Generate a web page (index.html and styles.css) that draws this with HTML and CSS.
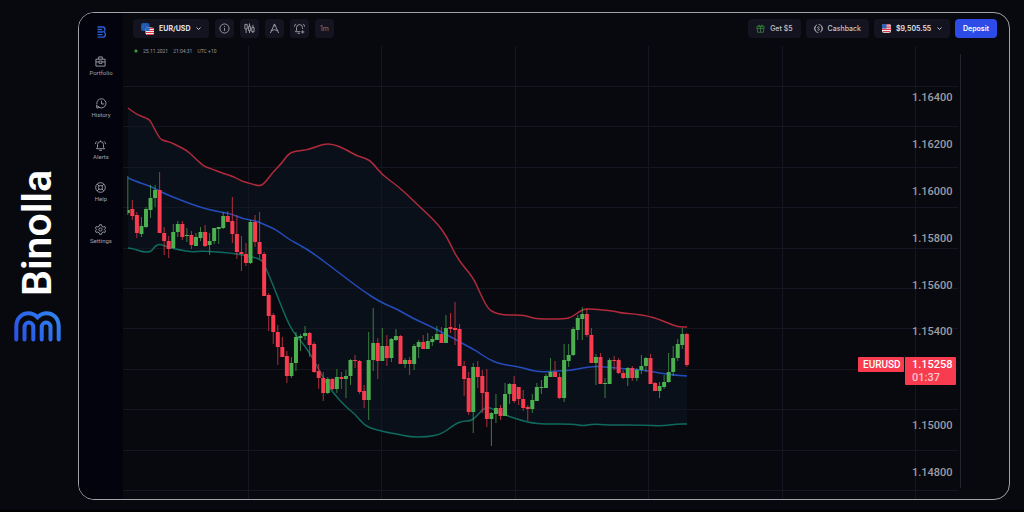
FILE: index.html
```html
<!DOCTYPE html>
<html lang="en">
<head>
  <meta charset="UTF-8" />
  <meta name="viewport" content="width=device-width, initial-scale=1" />
  <title>Binolla - EUR/USD</title>
  <link rel="stylesheet" href="styles.css">
</head>
<body>
  <div class="brand">
    <span class="brand-name">Binolla</span>
    <svg class="brand-logo" viewBox="0 0 47 31">
      <defs>
        <linearGradient id="brandFill" gradientUnits="userSpaceOnUse" x1="4" y1="31" x2="43" y2="0">
          <stop offset="0" stop-color="#2a50e8" />
          <stop offset="1" stop-color="#2f86ee" />
        </linearGradient>
      </defs>
      <g fill="none" stroke="url(#brandFill)" stroke-width="4" stroke-linecap="round">
        <path d="M2.3 28.5V15.500C2.3 7.500 7.5 2.3 14.500 2.3C18.300 2.3 21 3.800 23.500 6.300C26 3.800 28.700 2.300 32.500 2.3C39.500 2.3 44.700 7.500 44.700 15.500V28.500" />
        <path d="M10.500 28.500V16A4.400 4.400 0 0 1 19.300 16V28.500" />
        <path d="M27.700 28.500V16A4.400 4.400 0 0 1 36.500 16V28.500" />
      </g>
    </svg>
  </div>

  <div class="app">
    <nav class="sidebar">
      <a class="home" href="#" aria-label="Home">
        <svg viewBox="0 0 9 12">
          <path d="M.5 1H5.500Q8 1 8 3.400Q8 5 6.800 5.800Q8.400 6.800 8.400 8.400Q8.400 11.200 5.500 11.200H.5M.5 3.500H5M.5 6H6M.5 8.600H5.500" />
        </svg>
      </a>
      <a class="nav-item" href="#">
        <svg viewBox="0 0 24 24"><path d="M2 7H22V22H2ZM8 7V2H16V7M2 13H9M15 13H22M9 11H15V16H9Z" /></svg>
        <span>Portfolio</span>
      </a>
      <a class="nav-item" href="#">
        <svg viewBox="0 0 24 24"><path d="M2 14A10 10 0 1 1 7 20.500M12 6V13H18M1 16L2 22L8 20.500Z" /></svg>
        <span>History</span>
      </a>
      <a class="nav-item" href="#">
        <svg viewBox="0 0 24 24"><path d="M3 19H21L18.500 16V10A6.500 6.500 0 0 0 5.500 10V16ZM9 22.500H15M12 4V1M1 9Q1 5 4 3M23 9Q23 5 20 3" /></svg>
        <span>Alerts</span>
      </a>
      <a class="nav-item" href="#">
        <svg viewBox="0 0 24 24"><circle cx="12" cy="12" r="10.500" /><circle cx="12" cy="12" r="4.500" /><path d="M4.500 4.500L9 9M19.500 4.500L15 9M4.500 19.500L9 15M19.500 19.500L15 15" /></svg>
        <span>Help</span>
      </a>
      <a class="nav-item" href="#">
        <svg viewBox="0 0 24 24"><path d="M10 1.500H14L15 5L18 6.500L21.500 5.500L23 9L20.500 12L23 15L21.500 18.500L18 17.500L15 19L14 22.500H10L9 19L6 17.500L2.500 18.500L1 15L3.500 12L1 9L2.500 5.500L6 6.500L9 5Z" /><circle cx="12" cy="12" r="3.500" /></svg>
        <span>Settings</span>
      </a>
    </nav>

    <main class="main">
      <div class="topbar">
        <div class="pill pair">
          <svg class="flags" viewBox="0 0 26 24">
            <rect width="17" height="16" rx="4" fill="#1c56ae" />
            <circle cx="8" cy="8" r="4" fill="none" stroke="#5d8fce" stroke-width="1.500" stroke-dasharray="1.500 2" />
            <rect x="9" y="9" width="17" height="15" rx="4" fill="#eee" />
            <path d="M10 11H25M9 15H26M9 19H26M11 23H24" stroke="#e0354a" stroke-width="2" />
            <rect x="9" y="9" width="8" height="7" rx="2" fill="#2a64b8" />
          </svg>
          <select class="pair-select" aria-label="Asset">
            <option>EUR/USD</option>
            <option>GBP/USD</option>
          </select>
          <svg class="chevron" viewBox="0 0 10 6"><path d="M1 1L5 5L9 1" /></svg>
        </div>
        <button type="button" class="tool" aria-label="Info">
          <svg viewBox="0 0 24 24"><circle cx="12" cy="12" r="10" /><path d="M12 11V17M12 6.500V8.500" /></svg>
        </button>
        <button type="button" class="tool" aria-label="Chart type">
          <svg viewBox="0 0 24 24"><path d="M2 3H7V13H2ZM4.500 13V22M12 1V7M10 7H14V17H10ZM12 17V22M19.500 4V10M17 10H22V19H17ZM19.500 19V22" /></svg>
        </button>
        <button type="button" class="tool" aria-label="Drawing tools">
          <svg viewBox="0 0 24 24"><path d="M12 2L3 22M12 2L21 22M4 17Q12 12 20 17M10 6H14" /></svg>
        </button>
        <button type="button" class="tool" aria-label="Add alert">
          <svg viewBox="0 0 24 24"><path d="M14 19H3L5.500 16V10A6.500 6.500 0 0 1 18.500 10V13M8 22.500H13M1 8Q1 4 4 2M23 8Q23 4 20 2M19 16V23M15.500 19.500H22.500" /></svg>
        </button>
        <button type="button" class="tool timeframe">1m</button>

        <div class="account">
          <button type="button" class="pill">
            <svg class="gift" viewBox="0 0 24 24"><path d="M2 7H22V12H2ZM4 12V22H20V12M12 7V22M12 7Q5 7 6 3.500Q8 0 12 7Q16 0 18 3.500Q19 7 12 7" /></svg>
            Get $5
          </button>
          <button type="button" class="pill">
            <svg class="coin" viewBox="0 0 24 24"><path d="M8 2A11 11 0 0 0 12 23M16 22A11 11 0 0 0 12 1M15 8.500Q12 6.500 10 8.500Q9 11 12 12Q15 13 14 15.500Q12 17.500 9 15.500M4 6A10 10 0 0 0 4 18M20 6A10 10 0 0 1 20 18" /></svg>
            Cashback
          </button>
          <div class="pill">
            <svg class="us-flag" viewBox="0 0 20 20">
              <rect width="20" height="20" rx="5" fill="#eee" />
              <path d="M3 2H17M0 7H20M0 12H20M2 17H18" stroke="#e0354a" stroke-width="2.500" />
              <path d="M0 10V4Q0 0 4 0H10V10Z" fill="#2a64b8" />
            </svg>
            <select class="balance" aria-label="Account balance">
              <option>$9,505.55</option>
            </select>
            <svg class="chevron" viewBox="0 0 10 6"><path d="M1 1L5 5L9 1" /></svg>
          </div>
          <button type="button" class="pill deposit">Deposit</button>
        </div>
      </div>

      <div class="chart-area">
        <div class="clock"><i class="dot"></i><span>25.11.2021</span><span>21:04:31</span><span>UTC +10</span></div>
        <svg id="chart" class="chart" viewBox="123 40 886 459">
          <g id="grid" class="grid"></g>
          <path id="bandFill" class="band-fill" />
          <path id="bandUpper" class="line upper" />
          <path id="bandMiddle" class="line middle" />
          <path id="bandLower" class="line lower" />
          <g id="candles"></g>
          <path class="axis" d="M960.500 54V488" />
          <g id="prices" class="prices"></g>
          <g class="tag">
            <rect x="858" y="357" width="46" height="15" rx="1" />
            <rect x="905" y="357" width="51" height="28" rx="1" />
            <text class="symbol" x="863" y="368">EURUSD</text>
            <text x="912" y="368">1.15258</text>
            <text class="countdown" x="912" y="381">01:37</text>
          </g>
        </svg>
      </div>
    </main>
  </div>

  <script src="chart.js"></script>
</body>
</html>
```

FILE: styles.css
```css
* {
  box-sizing: border-box;
}

body {
  margin: 0;
  min-height: 100vh;
  display: flex;
  align-items: flex-start;
  padding: 12px 14px 10px 0;
  background-color: #08090e;
  border-bottom: 2px solid #000;
  font-family: Inter, "Liberation Sans", sans-serif;
  color: #c3c4cc;
}

/* brand strip */
.brand {
  width: 78px;
  flex: none;
  align-self: center;
  display: flex;
  flex-direction: column;
  align-items: center;
  gap: 14px;
  padding-right: 4px;
}

.brand-name {
  writing-mode: vertical-rl;
  transform: rotate(180deg);
  font-family: Roboto, sans-serif;
  font-size: 41px;
  line-height: 48px;
  font-weight: 600;
  color: #fff;
}

.brand-logo {
  width: 47px;
  height: 31px;
}

/* window */
.app {
  flex: 1;
  display: flex;
  border: 1px solid #a2a2a8;
  border-radius: 16px;
  overflow: hidden;
}

.sidebar {
  width: 44px;
  flex: none;
  display: flex;
  flex-direction: column;
  align-items: center;
  gap: 21px;
  padding-top: 13px;
  background-color: #03030d;
}

.sidebar svg,
.tool svg,
.gift,
.coin,
.chevron {
  fill: none;
  stroke: currentColor;
  stroke-width: 2;
}

.home {
  display: flex;
  height: 9px;
  color: #2a5fd8;
}

.home svg {
  width: 9px;
  height: 12px;
  stroke-width: 1.3;
}

.nav-item {
  display: flex;
  flex-direction: column;
  align-items: center;
  gap: 2px;
  color: #a0a1aa;
  font-family: Roboto, sans-serif;
  font-size: 6px;
  line-height: 8px;
  text-decoration: none;
}

.nav-item svg {
  width: 11px;
  height: 11px;
}

.main {
  flex: 1;
  min-width: 0;
}

/* top bar */
.topbar {
  display: flex;
  gap: 6px;
  padding: 6px 12px 2px 10px;
}

.account {
  display: flex;
  gap: 5px;
  margin-left: auto;
}

.pill,
.tool {
  height: 19px;
  display: flex;
  align-items: center;
  justify-content: center;
  border: none;
  border-radius: 4px;
  background-color: #141420;
  color: #c3c4cc;
  font-family: inherit;
  font-size: 7px;
  line-height: 10px;
  font-weight: 500;
}

.pill {
  gap: 5px;
  padding: 0 8px;
  white-space: nowrap;
}

.tool {
  width: 19px;
  padding: 0;
  color: #a0a1aa;
}

.tool svg {
  width: 11px;
  height: 11px;
}

.tool.timeframe {
  color: #7d7e88;
  font-weight: 400;
}

.pill select {
  appearance: none;
  border: none;
  padding: 0;
  background: none;
  color: #e2e3e8;
  font: inherit;
}

.pill .pair-select {
  font-weight: 700;
}

.pill .balance {
  font-weight: 600;
}

.flags {
  width: 13px;
  height: 12px;
}

.us-flag {
  width: 9px;
  height: 9px;
}

.chevron {
  width: 5px;
  height: 3px;
}

.gift,
.coin {
  width: 9px;
  height: 9px;
}

.gift {
  color: #37873f;
}

.pill.deposit {
  background-color: #2d4be6;
  color: #fff;
  font-weight: 600;
}

/* chart */
.chart-area {
  position: relative;
}

.clock {
  position: absolute;
  left: 11px;
  top: 7px;
  display: flex;
  align-items: center;
  gap: 5px;
  color: #94959e;
  font-family: Roboto, sans-serif;
  font-size: 5px;
  line-height: 8px;
}

.dot {
  width: 4px;
  height: 4px;
  border: 1px solid #174a1f;
  border-radius: 50%;
  background-color: #4fc05a;
}

.chart {
  display: block;
  width: 100%;
  height: auto;
}

.grid {
  stroke: #141621;
}

.band-fill {
  fill: #0a1019;
}

.line {
  fill: none;
  stroke-width: 1.5;
}

.upper { stroke: #b02a3c; }
.middle { stroke: #244cba; }
.lower { stroke: #10695e; }

.up { fill: #4caf50; stroke: #4caf50; }
.down { fill: #f93b4f; stroke: #f93b4f; }

.wick {
  stroke-opacity: 0.7;
}

.body {
  stroke: none;
}

.axis {
  stroke: #23242c;
}

.prices,
.tag text {
  font-family: Roboto, sans-serif;
  font-size: 11px;
  font-weight: 500;
  fill: #9c9da5;
}

.tag rect {
  fill: #f93b4f;
}

.tag text {
  fill: #fff;
}

.tag .symbol {
  font-size: 10px;
}

.tag .countdown {
  fill: #fcc5cc;
}
```

FILE: chart.js
```js
const FIRST_X = 127.8;
const STEP = 4.545;

// open, close, high, low
const candles = [
  [213,210,176,215],[209,216,200,220],[215,233,212,238],[234,226,217,237],[227,209,207,228],
  [210,198,185,218],[198,190,185,207],[190,233,172,233],[233,241,227,255],[241,249,236,258],
  [248,232,224,249],[232,224,221,237],[224,237,221,240],[236,235,228,242],[235,245,231,249],
  [246,237,233,246],[238,232,227,241],[232,246,225,247],[245,241,233,255],[241,228,228,244],
  [229,227,227,244],[228,216,212,229],[216,222,211,222],[221,234,197,243],[234,252,215,259],
  [252,254,236,271],[254,263,243,266],[263,222,220,264],[222,242,215,247],[242,254,212,259],
  [254,296,252,296],[295,316,293,331],[315,332,313,344],[332,347,325,365],[347,357,337,357],
  [356,376,351,383],[376,363,357,378],[363,337,332,371],[338,336,334,351],[336,333,326,340],
  [333,345,332,357],[344,372,342,373],[371,378,364,389],[378,393,372,401],[393,379,377,394],
  [379,389,378,390],[389,377,369,393],[377,379,372,389],[379,376,370,398],[376,360,359,385],
  [360,361,355,368],[361,392,360,394],[391,400,385,408],[400,360,332,420],[360,343,308,371],
  [343,361,338,379],[361,346,328,361],[346,358,335,366],[358,339,338,362],[340,336,329,341],
  [336,364,335,364],[364,360,358,368],[360,364,357,375],[364,346,344,370],[347,342,340,358],
  [342,349,335,349],[349,341,333,349],[342,339,336,346],[340,334,326,340],[334,343,327,343],
  [343,328,315,343],[327,329,313,333],[328,330,302,345],[329,366,324,366],[366,379,361,396],
  [378,412,372,415],[412,367,363,433],[367,377,361,388],[376,393,370,413],[392,419,369,427],
  [419,413,412,446],[414,408,394,423],[408,416,405,420],[416,394,383,416],[394,384,383,404],
  [384,401,376,403],[387,399,387,405],[399,408,390,411],[407,409,405,421],[409,400,394,413],
  [401,387,383,401],[388,387,380,394],[388,376,374,388],[377,372,358,377],[372,377,361,377],
  [377,398,373,399],[398,360,344,402],[361,355,344,367],[355,329,327,356],[330,318,315,340],
  [319,314,307,340],[314,335,308,337],[335,363,328,363],[363,357,354,385],[357,384,353,384],
  [384,383,378,398],[384,360,358,384],[360,361,356,370],[360,373,358,374],[373,378,370,379],
  [378,368,367,386],[368,378,366,381],[378,370,368,381],[370,366,355,374],[366,358,357,372],
  [358,384,354,384],[383,391,382,391],[391,386,382,398],[387,382,375,389],[382,372,353,383],
  [372,358,346,376],[358,344,339,361],[345,334,328,349],[334,365,333,367]
];

const upper = [
  [128,108],[132,111],[138,115],[146,118],[150,120],[154,128],[160,139],[165,141],[170,142],
  [178,146],[186,150],[193,156],[203,166],[212,169],[222,173],[235,177],[241,181],[252,184],
  [259,186],[264,184],[273,172],[282,163],[288,154],[295,151],[308,150],[323,144],[333,144],
  [345,149],[357,156],[365,158],[372,162],[382,175],[398,186],[420,207],[437,223],[447,237],
  [458,260],[473,277],[480,293],[488,309],[495,313],[504,315],[522,315],[530,317],[537,319],
  [565,319],[572,317],[580,311],[585,309],[592,309],[614,311],[621,313],[635,314],[648,316],
  [658,319],[668,323],[678,327],[687,327]
];

const middle = [
  [128,178],[140,183],[150,186],[163,193],[183,201],[202,208],[220,212],[232,214],[243,219],
  [257,221],[265,225],[275,229],[290,240],[298,244],[313,253],[342,275],[363,291],[382,303],
  [397,309],[412,318],[432,327],[443,333],[455,339],[467,346],[475,350],[488,359],[500,364],
  [520,367],[530,370],[540,372],[560,371],[573,370],[592,366],[607,367],[627,369],[643,370],
  [660,373],[673,375],[687,376]
];

const lower = [
  [128,248],[135,249],[142,252],[151,252],[155,246],[160,244],[167,247],[180,250],[192,252],
  [202,251],[217,252],[230,253],[243,255],[253,257],[262,260],[265,266],[273,285],[282,308],
  [291,329],[300,340],[310,353],[320,372],[332,392],[347,408],[355,414],[364,425],[373,429],
  [390,433],[397,434],[410,437],[427,437],[442,434],[455,424],[463,421],[470,421],[475,418],
  [482,410],[487,407],[493,409],[502,414],[523,421],[532,423],[543,424],[573,424],[583,426],
  [593,424],[607,425],[643,425],[662,426],[677,424],[687,424]
];

const prices = [
  ['1.16400', 97], ['1.16200', 144], ['1.16000', 191], ['1.15800', 238], ['1.15600', 285],
  ['1.15400', 331], ['1.15000', 425], ['1.14800', 472]
];

// rounds the corners by going through the middle of each segment
function curve(points) {
  let d = '';
  for (let i = 1; i < points.length - 1; i++) {
    const [x, y] = points[i];
    const [nx, ny] = points[i + 1];
    d += `Q${x} ${y} ${(x + nx) / 2} ${(y + ny) / 2}`;
  }
  return d + 'L' + points[points.length - 1];
}

function line(points) {
  return 'M' + points[0] + curve(points);
}

document.getElementById('bandUpper').setAttribute('d', line(upper));
document.getElementById('bandMiddle').setAttribute('d', line(middle));
document.getElementById('bandLower').setAttribute('d', line(lower));

const back = lower.slice().reverse();
document.getElementById('bandFill').setAttribute('d', line(upper) + 'L' + back[0] + curve(back) + 'Z');

let grid = '';
for (let i = 0; i < 11; i++) {
  const y = Math.round(86 + i * 40.4) + 0.5;
  grid += `<path d="M123 ${y}H958" />`;
}
for (let i = 0; i < 6; i++) {
  const x = Math.round(248 + i * 133.4) + 0.5;
  grid += `<path d="M${x} 46V499" />`;
}
// grid again over the band, so that it shows through the fill
document.getElementById('grid').innerHTML = grid;
document.getElementById('bandFill').after(document.getElementById('grid'));

document.getElementById('candles').innerHTML = candles.map(([open, close, high, low], i) => {
  const x = FIRST_X + i * STEP;
  const top = Math.min(open, close);
  const height = Math.max(Math.abs(open - close), 1);
  // the first candle is cut by the left edge of the plot
  const left = i === 0 ? x : x - 2;
  const width = i === 0 ? 2 : 4;
  return `<g class="${close < open ? 'up' : 'down'}">
    <path class="wick" d="M${x} ${high}V${low}" />
    <rect class="body" x="${left}" y="${top}" width="${width}" height="${height}" />
  </g>`;
}).join('');

document.getElementById('prices').innerHTML = prices.map(([label, y]) =>
  `<text x="912" y="${y + 4}">${label}</text>`
).join('');
```
